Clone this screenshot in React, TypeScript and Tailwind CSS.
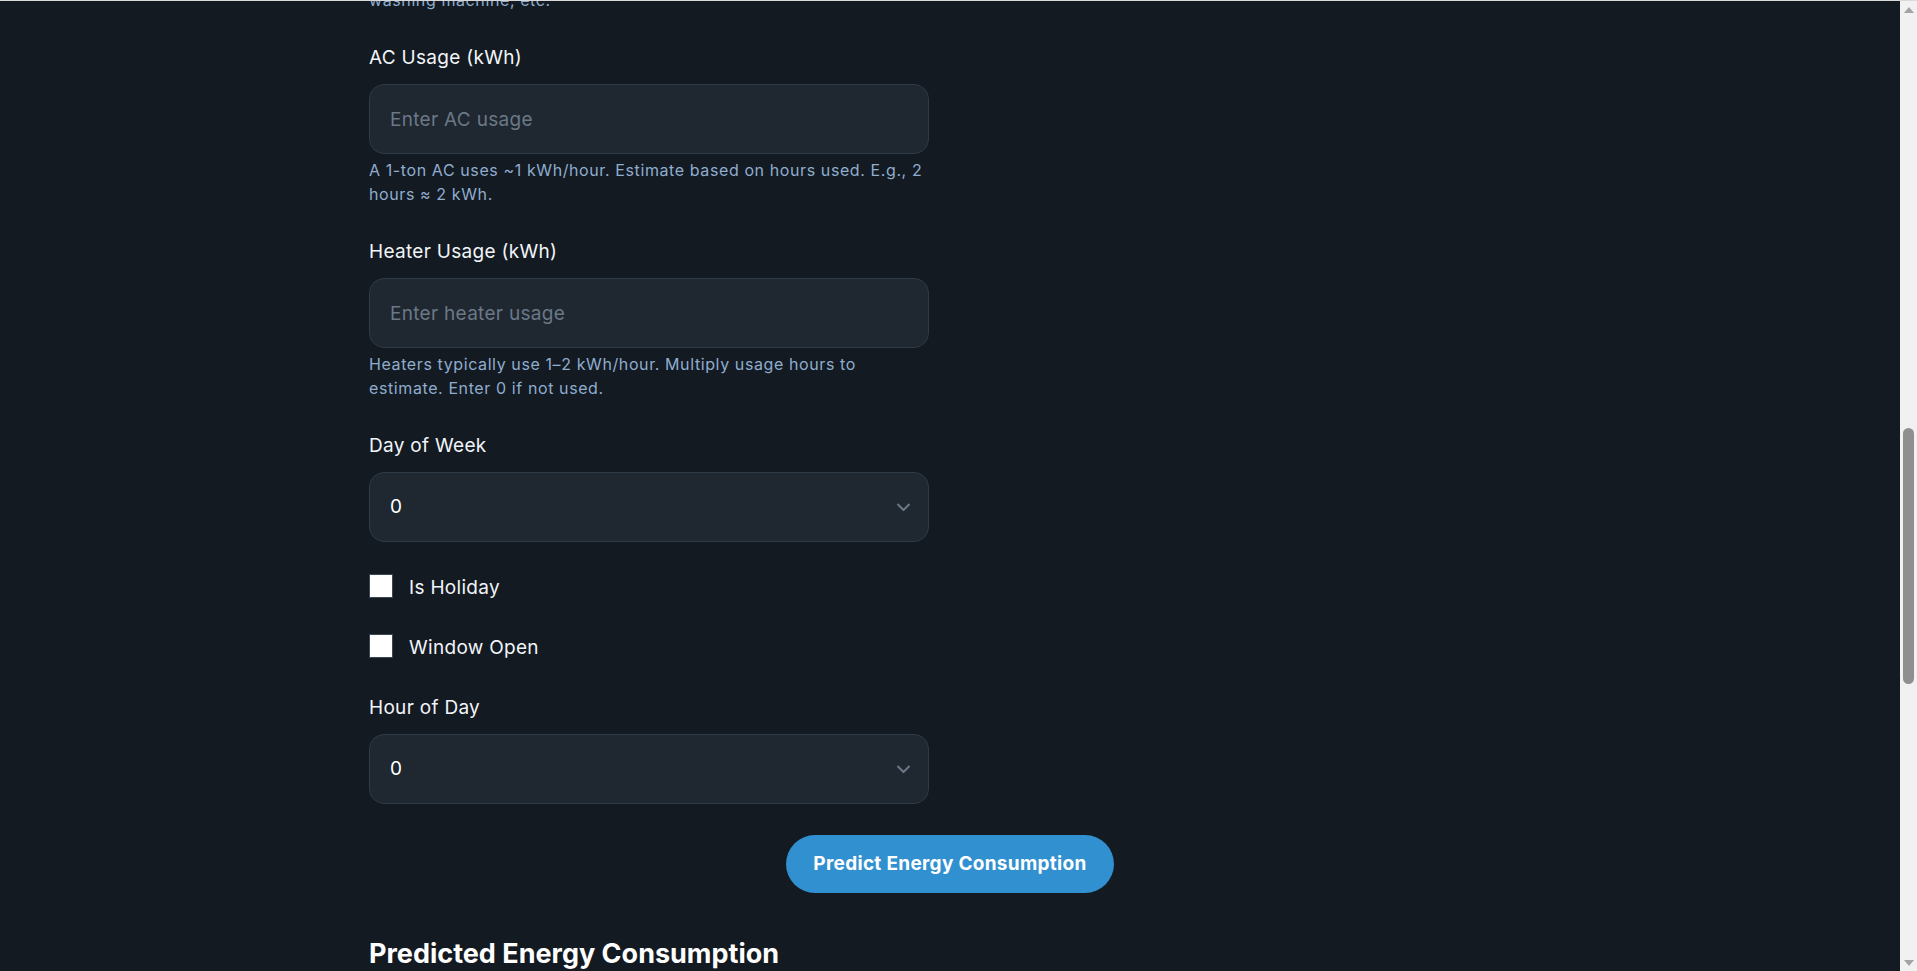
import { useLayoutEffect, useRef, useState } from "react";

type NumberFieldProps = {
  label: string;
  placeholder: string;
  hint?: string;
};

const FONT = { fontFamily: "Inter, 'Noto Sans', sans-serif" };

const LABEL = "block mb-3 text-[19px] leading-7 tracking-[0.3px] text-[#f1f5f9]";
const CONTROL =
  "w-full h-[70px] px-5 rounded-[15px] border border-[#2d3a47] bg-[#1f2731] text-[19px] tracking-[0.3px] text-white outline-none";
const HINT = "mt-1 text-base leading-6 tracking-[0.6px] text-[#8eadcf]";

function NumberField({ label, placeholder, hint }: NumberFieldProps) {
  return (
    <div>
      <label className={LABEL}>{label}</label>
      <input type="number" placeholder={placeholder} className={`${CONTROL} placeholder:text-[#6b7886]`} />
      {hint && <p className={HINT}>{hint}</p>}
    </div>
  );
}

function SelectField({ label, options }: { label: string; options: number[] }) {
  const [value, setValue] = useState("0");
  return (
    <div>
      <label className={LABEL}>{label}</label>
      <div className="relative">
        <select value={value} onChange={(e) => setValue(e.target.value)} className={`${CONTROL} appearance-none`}>
          {options.map((o) => (
            <option key={o} value={o}>
              {o}
            </option>
          ))}
        </select>
        <svg
          className="pointer-events-none absolute right-[18px] top-1/2 -translate-y-1/2 w-[15px] h-[9px] text-[#6b7886]"
          viewBox="0 0 15 9"
          fill="none"
          stroke="currentColor"
          strokeWidth="2"
        >
          <path d="M1.5 1.5l6 6 6-6" />
        </svg>
      </div>
    </div>
  );
}

function CheckField({ label }: { label: string }) {
  const [checked, setChecked] = useState(false);
  return (
    <label className="flex items-start gap-4 text-[19px] leading-7 tracking-[0.3px] text-[#f1f5f9]">
      <input
        type="checkbox"
        checked={checked}
        onChange={(e) => setChecked(e.target.checked)}
        className="appearance-none w-6 h-6 bg-white border border-[#3a4855] checked:bg-[#3190cf]"
      />
      {label}
    </label>
  );
}

// classic scrollbar, since the page is shown scrolled
function ScrollBar({ top, size }: { top: number; size: number }) {
  return (
    <div className="w-[17px] h-full flex flex-col bg-[#f1f1f1]">
      <div className="h-[17px] flex items-center justify-center text-[#a3a3a3]">
        <svg viewBox="0 0 10 6" className="w-[10px] h-[6px]" fill="currentColor">
          <path d="M5 0l5 6H0z" />
        </svg>
      </div>
      <div className="flex-1 flex flex-col items-center">
        <div style={{ height: top }} />
        <div className="w-[11px] rounded-full bg-[#8f8f8f]" style={{ height: size }} />
      </div>
      <div className="h-[17px] flex items-center justify-center text-[#a3a3a3]">
        <svg viewBox="0 0 10 6" className="w-[10px] h-[6px]" fill="currentColor">
          <path d="M0 0h10L5 6z" />
        </svg>
      </div>
    </div>
  );
}

export default function App() {
  const scrollRef = useRef<HTMLDivElement>(null);
  const acRef = useRef<HTMLDivElement>(null);
  const [thumb, setThumb] = useState({ top: 0, size: 0 });

  const updateThumb = () => {
    const el = scrollRef.current;
    if (!el) return;
    const track = el.clientHeight - 34;
    const size = Math.max(20, (el.clientHeight / el.scrollHeight) * track);
    const max = el.scrollHeight - el.clientHeight;
    setThumb({ top: max > 0 ? (el.scrollTop / max) * (track - size) : 0, size });
  };

  // open the page scrolled down to the AC field, like the screenshot
  useLayoutEffect(() => {
    if (scrollRef.current && acRef.current) {
      scrollRef.current.scrollTop = acRef.current.offsetTop - 43;
    }
    updateThumb();
  }, []);

  const days = [0, 1, 2, 3, 4, 5, 6];
  const hours = Array.from({ length: 24 }, (_, i) => i);

  return (
    <div className="h-screen flex border-t border-[#d9d9d9] bg-[#141a21] text-white" style={FONT}>
      <div
        ref={scrollRef}
        onScroll={updateThumb}
        className="relative flex-1 h-full overflow-y-scroll [scrollbar-width:none]"
      >
        <div className="mx-auto w-[1162px] pt-16 pb-52">
          <h1 className="mb-3 text-4xl font-bold">Smart Energy Predictor</h1>
          <p className="mb-12 w-[560px] text-base leading-6 text-[#8eadcf]">
            Fill in your household details below and we will estimate how much energy you are likely to use today.
          </p>

          <div className="flex flex-col gap-8 w-[560px]">
            <NumberField label="Temperature (°C)" placeholder="Enter temperature" hint="Average outdoor temperature for the day." />
            <NumberField label="Humidity (%)" placeholder="Enter humidity" hint="Relative humidity, usually between 30% and 90%." />
            <NumberField label="Square Footage" placeholder="Enter square footage" hint="Total floor area of the home in square feet." />
            <NumberField label="Occupancy" placeholder="Enter number of people" hint="Number of people at home during the day." />
            <NumberField label="Renewable Energy (kWh)" placeholder="Enter renewable energy" hint="Energy from solar panels or other sources. Enter 0 if none." />
            <NumberField label="Lighting Usage (kWh)" placeholder="Enter lighting usage" hint="A 10W LED bulb on for 10 hours uses about 0.1 kWh." />
            <NumberField label="EV Charging (kWh)" placeholder="Enter EV charging" hint="Energy used to charge an electric vehicle. Enter 0 if none." />
            <NumberField
              label="Appliance Usage (kWh)"
              placeholder="Enter appliance usage"
              hint="Add up everyday appliances such as the fridge, TV, microwave, washing machine, etc."
            />
            <div ref={acRef}>
              <NumberField
                label="AC Usage (kWh)"
                placeholder="Enter AC usage"
                hint="A 1-ton AC uses ~1 kWh/hour. Estimate based on hours used. E.g., 2 hours ≈ 2 kWh."
              />
            </div>
            <NumberField
              label="Heater Usage (kWh)"
              placeholder="Enter heater usage"
              hint="Heaters typically use 1–2 kWh/hour. Multiply usage hours to estimate. Enter 0 if not used."
            />
            <SelectField label="Day of Week" options={days} />
            <CheckField label="Is Holiday" />
            <CheckField label="Window Open" />
            <SelectField label="Hour of Day" options={hours} />
          </div>

          <div className="flex justify-center mt-[31px]">
            <button className="h-[58px] px-[27px] rounded-full bg-[#3190cf] text-[19px] font-bold tracking-[0.3px] text-white">
              Predict Energy Consumption
            </button>
          </div>

          <h2 className="mt-[43px] text-[27px] leading-9 font-bold">Predicted Energy Consumption</h2>
          <div className="mt-6 w-[560px] rounded-[15px] border border-[#2d3a47] bg-[#1f2731] p-6">
            <p className="text-base leading-6 text-[#8eadcf]">Fill in the form and press the button to see your estimate.</p>
            <p className="mt-4 text-5xl font-bold text-white">-- kWh</p>
          </div>

          <h2 className="mt-16 text-[27px] leading-9 font-bold">How It Works</h2>
          <p className="mt-6 w-[560px] text-base leading-6 text-[#8eadcf]">
            The model looks at weather, the size of your home, how many people are in it and how long each appliance
            runs, then estimates the total energy you will use for the selected hour and day.
          </p>

          <h2 className="mt-16 text-[27px] leading-9 font-bold">Energy Saving Tips</h2>
          <ul className="mt-6 w-[560px] flex flex-col gap-4 text-base leading-6 text-[#8eadcf]">
            <li>Set the AC to 24°C or higher to cut cooling costs.</li>
            <li>Switch off heaters and AC when windows are open.</li>
            <li>Run heavy appliances outside peak evening hours.</li>
            <li>Replace old bulbs with LED lighting.</li>
            <li>Unplug chargers and devices that are not in use.</li>
          </ul>

          <footer className="mt-24 pt-8 border-t border-[#2d3a47] text-sm text-[#6b7886]">
            Energy Predictor · Estimates are for guidance only.
          </footer>
        </div>
      </div>
      <ScrollBar top={thumb.top} size={thumb.size} />
    </div>
  );
}
